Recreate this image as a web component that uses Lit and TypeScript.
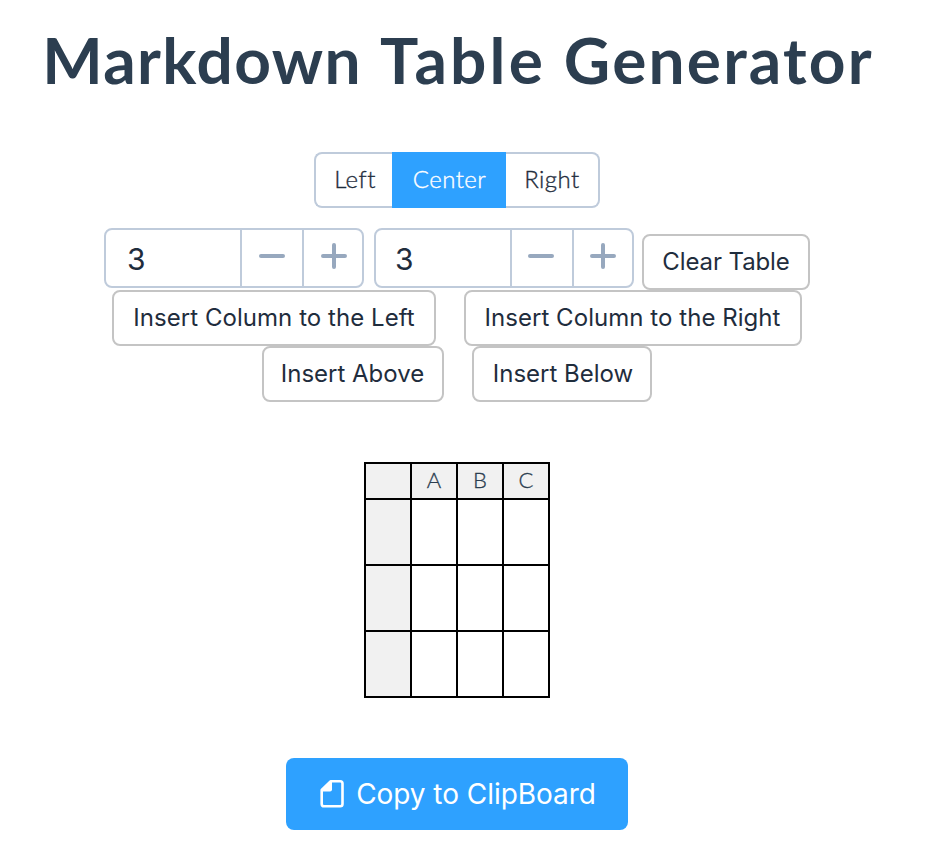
import { LitElement, html, css } from "lit";
import { customElement, state } from "lit/decorators.js";

const columnName = (i: number) => String.fromCharCode(65 + i);

@customElement("number-stepper")
class NumberStepper extends LitElement {
  @state() private value = 3;

  static styles = css`
    :host {
      display: block;
    }
    .box {
      box-sizing: border-box;
      display: flex;
      width: 260px;
      height: 60px;
      border: 2px solid #bfcbdb;
      border-radius: 8px;
      background: #fff;
    }
    .value {
      width: 134px;
      padding: 4px 0 0 var(--inset, 21px);
      box-sizing: border-box;
      font: 400 30px/50px Inter, sans-serif;
      color: #1f2d3d;
    }
    .btn {
      box-sizing: border-box;
      width: 62px;
      padding: 0;
      border: 0;
      border-left: 2px solid #bfcbdb;
      background: none;
      display: flex;
      justify-content: center;
      align-items: flex-start;
    }
    .btn:last-child {
      flex: 1;
    }
    svg {
      display: block;
      flex: none;
      margin-top: 12px;
      margin-left: var(--nudge, 0px);
      stroke: #97a8be;
      stroke-width: 4;
      stroke-linecap: round;
    }
    .btn:last-child svg {
      margin-left: calc(var(--nudge, 0px) + 2px);
    }
  `;

  render() {
    return html`<div class="box">
      <div class="value">${this.value}</div>
      <button class="btn" aria-label="decrease" @click=${() => this.value--}>
        <svg width="28" height="28" viewBox="0 0 28 28"><path d="M3 14H25" /></svg>
      </button>
      <button class="btn" aria-label="increase" @click=${() => this.value++}>
        <svg width="28" height="28" viewBox="0 0 28 28"><path d="M3 14H25M14 3V25" /></svg>
      </button>
    </div>`;
  }
}

@customElement("app-root")
class AppRoot extends LitElement {
  @state() private align = "Center";

  static styles = css`
    :host {
      display: block;
      width: 914px;
      height: 862px;
      overflow: hidden;
      background: #fff;
      color: #2c3e50;
      font-family: Lato, sans-serif;
    }
    .page {
      display: flex;
      flex-direction: column;
      align-items: center;
    }
    h1 {
      margin: 18px 0 0;
      height: 134px;
      padding-left: 2px;
      font-size: 64px;
      line-height: 84px;
      font-weight: 700;
      letter-spacing: 2.2px;
      white-space: nowrap;
    }
    .tight {
      letter-spacing: 1.4px;
    }
    .loose {
      letter-spacing: 3.2px;
    }
    button {
      box-sizing: border-box;
      white-space: nowrap;
      padding: 0;
      margin: 0;
    }
    .segments {
      display: flex;
      height: 56px;
    }
    .segment {
      width: 94px;
      border: 2px solid #bfcbdb;
      background: #fff;
      color: #1f2d3d;
      font: 300 24px/50px Lato, sans-serif;
      -webkit-text-stroke: 0.35px currentColor;
      letter-spacing: 0.45px;
      padding-bottom: 2px;
    }
    .segment:first-child {
      width: 78px;
      padding-left: 2px;
      border-right: 0;
      border-radius: 8px 0 0 8px;
    }
    .segment:last-child {
      border-left: 0;
      border-radius: 0 8px 8px 0;
    }
    .segment.active {
      width: 114px;
      padding-left: 1px;
      border-color: #2ea1ff;
      background: #2ea1ff;
      color: #fff;
    }
    .row {
      display: flex;
      justify-content: center;
    }
    .counts {
      margin-top: 20px;
      height: 62px;
      gap: 10px;
      align-items: flex-start;
    }
    .counts number-stepper + number-stepper {
      --inset: 19px;
      --nudge: -2px;
    }
    .plain {
      height: 56px;
      border: 2px solid #c4c4c4;
      border-radius: 8px;
      background: #fff;
      color: #1f2d3d;
      font: 400 24px/52px Inter, sans-serif;
      letter-spacing: 0;
    }
    .clear {
      width: 168px;
      margin: 6px 0 0 -2px;
      letter-spacing: -0.1px;
    }
    .inserts {
      gap: 28px;
    }
    .col-left {
      width: 324px;
      letter-spacing: 0.05px;
    }
    .col-right {
      width: 338px;
      letter-spacing: 0.05px;
      padding-right: 1px;
    }
    .above {
      width: 182px;
      padding-right: 1px;
    }
    .below {
      width: 180px;
      padding-left: 2px;
    }
    .grid {
      display: grid;
      grid-template-columns: repeat(4, 44px);
      grid-template-rows: 34px repeat(3, 64px);
      gap: 2px;
      padding: 2px;
      margin-top: 60px;
      background: #000;
    }
    .cell {
      background: #fff;
    }
    .head {
      background: #f1f1f1;
      font-size: 22px;
      line-height: 32px;
      font-weight: 300;
      -webkit-text-stroke: 0.3px currentColor;
      text-align: center;
    }
    .copy {
      display: flex;
      justify-content: center;
      align-items: center;
      gap: 12px;
      width: 342px;
      height: 72px;
      margin-top: 60px;
      padding-left: 2px;
      border: 0;
      border-radius: 8px;
      background: #2ea1ff;
      color: #fff;
      font: 400 28px/72px Inter, sans-serif;
      letter-spacing: -0.05px;
    }
    .copy svg {
      display: block;
    }
  `;

  render() {
    return html`<main class="page">
      <h1><span class="tight">Markdown</span> <span class="loose">Table</span> Generator</h1>
      <div class="segments">
        ${["Left", "Center", "Right"].map(
          (name) => html`<button
            class="segment ${this.align === name ? "active" : ""}"
            @click=${() => (this.align = name)}
          >${name}</button>`
        )}
      </div>
      <div class="row counts">
        <number-stepper></number-stepper>
        <number-stepper></number-stepper>
        <button class="plain clear">Clear Table</button>
      </div>
      <div class="row inserts">
        <button class="plain col-left">Insert Column to the Left</button>
        <button class="plain col-right">Insert Column to the Right</button>
      </div>
      <div class="row inserts">
        <button class="plain above">Insert Above</button>
        <button class="plain below">Insert Below</button>
      </div>
      <div class="grid">
        <div class="head"></div>
        ${[0, 1, 2].map((c) => html`<div class="head">${columnName(c)}</div>`)}
        ${[0, 1, 2].map(
          () => html`<div class="head"></div>
            ${[0, 1, 2].map(() => html`<div class="cell"></div>`)}`
        )}
      </div>
      <button class="copy">
        <svg width="24" height="30" viewBox="0 0 24 30">
          <path d="M10.5 2.3H20.2Q22.5 2.3 22.5 4.6V25Q22.5 27.3 20.2 27.3H4Q1.7 27.3 1.7 25V11Z" fill="none" stroke="#fff" stroke-width="2.6" stroke-linejoin="round" />
          <path d="M10 2H12V10.5Q12 12.5 10 12.5H2V10Z" fill="#fff" />
        </svg>
        <span>Copy to ClipBoard</span>
      </button>
    </main>`;
  }
}
